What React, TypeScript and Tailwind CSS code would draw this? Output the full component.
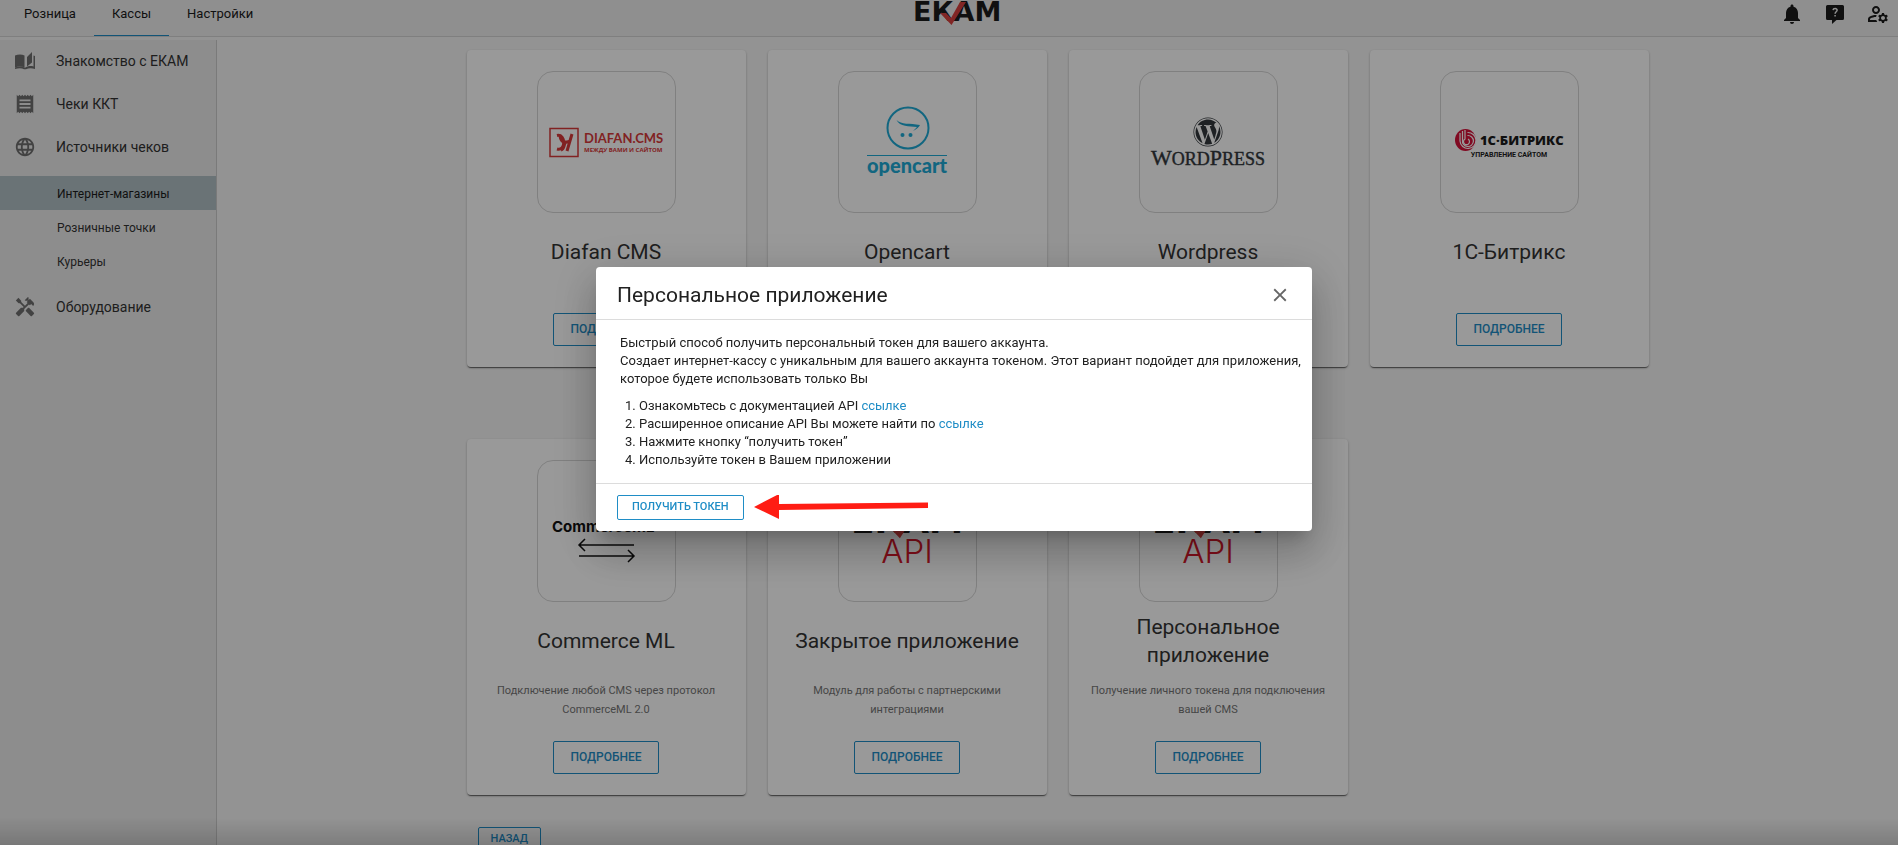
import { ReactNode } from "react";
import { FaWordpress } from "react-icons/fa";
import {
	MdClose,
	MdHandyman,
	MdLanguage,
	MdNotifications,
	MdOutlineManageAccounts,
	MdReceipt,
} from "react-icons/md";

const EkamMark = () => (
	<>
		<text x="0" y="19" fill="#1b1b1b" fontFamily="DejaVu Sans" fontWeight="700" fontSize="27">ЕКАМ</text>
		<path d="M27 11h6l5 5L47 0h6L38.500 23z" fill="#d8403f" />
	</>
);

const LogoFrame = ({ children, label }: { children: ReactNode; label: string }) => (
	<svg viewBox="0 0 137 140" className="h-[140px] w-[137px]" role="img" aria-label={label}>
		{children}
	</svg>
);

const DiafanLogo = () => (
	<LogoFrame label="Diafan CMS">
		<g fill="none" stroke="#d8393a">
			<rect x="12" y="56.500" width="28" height="28" strokeWidth="1.500" />
			<path d="M19 63.500c9-2 9 16 0 13.500" strokeWidth="3" />
			<path d="M22 64c1 6 4 7 9 5.500M34 62l-5 17M28 70c-3 3-1 7-5 8" strokeWidth="3" />
		</g>
		<text x="46" y="71" fill="#d8393a" fontFamily="Lato" fontWeight="700" fontSize="13">DIAFAN.CMS</text>
		<text x="46" y="80" fill="#d8393a" fontFamily="Open Sans" fontWeight="700" fontSize="6">МЕЖДУ ВАМИ И САЙТОМ</text>
	</LogoFrame>
);

const OpencartLogo = () => (
	<LogoFrame label="Opencart">
		<circle cx="69" cy="56" r="20.500" fill="none" stroke="#1eaad6" strokeWidth="2" />
		<path d="M57.500 48c5 5 13 3 23.500 5-1 2-3 4-7 6 2-2 3-3 4-4-8-1-17 0-20.500-7z" fill="#1eaad6" />
		<circle cx="63.500" cy="63" r="2" fill="#1eaad6" />
		<circle cx="71.500" cy="63" r="2" fill="#1eaad6" />
		<path d="M28 83.500h80" stroke="#1eaad6" />
		<text x="68" y="101" textAnchor="middle" fill="#1eaad6" fontFamily="Lato" fontWeight="900" fontSize="20">opencart</text>
	</LogoFrame>
);

const WordpressLogo = () => (
	<LogoFrame label="Wordpress">
		<FaWordpress x="53" y="45" size={30} color="#32373c" />
		<text x="68" y="93" textAnchor="middle" fill="#32373c" stroke="#32373c" strokeWidth="0.400" fontFamily="Liberation Serif" fontSize="18">
			<tspan fontSize="22">W</tspan>ORD<tspan fontSize="22">P</tspan>RESS
		</text>
	</LogoFrame>
);

const BitrixLogo = () => (
	<LogoFrame label="1С-Битрикс">
		<ellipse cx="24.500" cy="68" rx="10.500" ry="11" fill="#d6123a" />
		<g fill="none" stroke="#fff" strokeWidth="1.200">
			<path d="M24 58v9a3 3 0 1 0 3 0" />
			<path d="M21.500 59v9a5.500 5.500 0 1 0 5-4.500" />
			<path d="M19 61v8a8 8 0 1 0 7.500-8.500" />
		</g>
		<text x="39" y="73" fill="#1b1b1b" fontFamily="Open Sans" fontWeight="800" fontSize="13">1С·БИТРИКС</text>
		<text x="68" y="85" textAnchor="middle" fill="#1b1b1b" fontFamily="Roboto" fontWeight="700" fontSize="7">УПРАВЛЕНИЕ САЙТОМ</text>
	</LogoFrame>
);

const CommerceLogo = () => (
	<LogoFrame label="Commerce ML">
		<text x="14" y="71" fill="#111" fontFamily="Inter" fontWeight="700" fontSize="15">CommerceML</text>
		<path d="M96 84H41m6-6-6 6 6 6M41 95h55m-6-6 6 6-6 6" fill="none" stroke="#111" strokeWidth="1.500" />
	</LogoFrame>
);

const EkamApiLogo = () => (
	<LogoFrame label="EKAM API">
		<g transform="translate(12 48) scale(1.270)">
			<EkamMark />
		</g>
		<text x="68" y="102" textAnchor="middle" fill="#d6182a" fontFamily="Inter" fontWeight="300" fontSize="33">API</text>
	</LogoFrame>
);

const BookIcon = () => (
	<svg viewBox="0 0 20 18" className="h-[18px] w-5" fill="currentColor">
		<path d="M0 3.500C3 2 7 2 9.500 3.500v12C7 14 3 14 0 15.500zM12 5l5-5v10.500l-5 4z" />
		<path d="M18.500 3.500v11c-3-.8-6-.4-8.500 1.200-2.500-1.600-6.500-1.700-10-.2v1.500c3.500-1 7-1 9 .2h2c2.500-1.200 6-1.200 9-.2V4z" />
	</svg>
);

const HelpIcon = () => (
	<svg viewBox="0 0 24 24" className="size-6">
		<path d="M4.500 3h15A1.500 1.500 0 0 1 21 4.500v12a1.500 1.500 0 0 1-1.500 1.500h-6L9 22v-4H4.500A1.500 1.500 0 0 1 3 16.500v-12A1.500 1.500 0 0 1 4.500 3z" fill="currentColor" />
		<path d="M10 8.200c.3-2.200 4.300-2.100 4.100.1-.1 1.500-2 1.500-2 3.400m0 1.300v1.600" fill="none" stroke="#eeeeee" strokeWidth="1.500" />
	</svg>
);

const tabs = ["Розница", "Кассы", "Настройки"];

const sources = ["Интернет-магазины", "Розничные точки", "Курьеры"];

const cards = [
	{ title: "Diafan CMS", logo: <DiafanLogo /> },
	{ title: "Opencart", logo: <OpencartLogo /> },
	{ title: "Wordpress", logo: <WordpressLogo /> },
	{ title: "1С-Битрикс", logo: <BitrixLogo /> },
	{
		title: "Commerce ML",
		logo: <CommerceLogo />,
		description: "Подключение любой CMS через протокол CommerceML 2.0",
	},
	{
		title: "Закрытое приложение",
		logo: <EkamApiLogo />,
		description: "Модуль для работы с партнерскими интеграциями",
	},
	{
		title: "Персональное приложение",
		logo: <EkamApiLogo />,
		description: "Получение личного токена для подключения вашей CMS",
	},
];

const Header = () => (
	<header className="flex h-[37px] border-b border-[#d4d4d4] bg-[#eeeeee] text-[#1b1b1b]">
		<nav className="flex flex-1 pl-1.5">
			{tabs.map((tab) => (
				<button
					key={tab}
					type="button"
					className={`h-9 border-b px-[18px] pb-2 text-[13px] ${
						tab === "Кассы" ? "border-[#1f8dc6]" : "border-transparent"
					}`}>
					{tab}
				</button>
			))}
		</nav>
		<a href="#" className="pt-0.5 pl-5" aria-label="ЕКАМ">
			<svg viewBox="0 0 91 22" className="h-[22px] w-[91px] overflow-visible">
				<EkamMark />
			</svg>
		</a>
		<div className="flex flex-1 items-center justify-end gap-[19px] pr-2 pb-2">
			<button type="button" aria-label="Уведомления">
				<MdNotifications className="size-6" />
			</button>
			<button type="button" aria-label="Помощь">
				<HelpIcon />
			</button>
			<button type="button" aria-label="Аккаунт">
				<MdOutlineManageAccounts className="size-6" />
			</button>
		</div>
	</header>
);

const SidebarLink = ({ icon, children }: { icon: ReactNode; children: ReactNode }) => (
	<a href="#" className="flex h-[43px] items-center gap-[21px] pb-0.5 pl-[15px] text-sm text-[#333333]">
		<span className="flex w-5 justify-center text-[#6f6f6f]">{icon}</span>
		{children}
	</a>
);

const Sidebar = () => (
	<aside className="mt-[3px] w-[217px] shrink-0 border-r border-[#cccccc] bg-[#ebebeb]">
		<SidebarLink icon={<BookIcon />}>Знакомство с ЕКАМ</SidebarLink>
		<SidebarLink icon={<MdReceipt className="size-[22px] shrink-0" />}>Чеки ККТ</SidebarLink>
		<SidebarLink icon={<MdLanguage className="size-[22px] shrink-0" />}>Источники чеков</SidebarLink>
		<div className="mt-[7px] mb-2">
			{sources.map((source, index) => (
				<a
					key={source}
					href="#"
					className={`flex h-[34px] items-center pt-0.5 pl-[57px] text-xs ${
						index === 0 ? "bg-[#b1c0c5] text-[#1b1b1b]" : "text-[#333333]"
					}`}>
					{source}
				</a>
			))}
		</div>
		<SidebarLink icon={<MdHandyman className="size-[22px] shrink-0" />}>Оборудование</SidebarLink>
	</aside>
);

const Card = ({ title, logo, description }: { title: string; logo: ReactNode; description?: string }) => (
	<article className="flex flex-col items-center rounded bg-white px-5 py-[21px] text-center shadow-[0_2px_1px_-1px_rgba(0,0,0,0.4),0_1px_1px_rgba(0,0,0,0.2),0_1px_3px_rgba(0,0,0,0.2)]">
		<div className="rounded-2xl border border-[#d6d6d6]">{logo}</div>
		<h2 className="flex min-h-[78px] items-center text-[21px] leading-7 text-[#333333]">{title}</h2>
		{description && <p className="px-0.5 pt-px text-[11px] leading-[19px] text-[#757575]">{description}</p>}
		<button
			type="button"
			className="mt-[22px] h-[33px] rounded-xs border border-[#1f8dc6] px-4 pb-0.5 text-xs font-medium text-[#1f8dc6]">
			ПОДРОБНЕЕ
		</button>
	</article>
);

const TokenDialog = () => (
	<div className="fixed inset-0 flex items-start justify-center bg-black/40 pt-[267px] pl-2.5">
		<div className="absolute inset-x-0 bottom-0 h-7 bg-linear-to-b from-transparent to-black/15" />
		<section
			role="dialog"
			aria-modal="true"
			aria-labelledby="dialog-title"
			className="relative w-full max-w-[716px] rounded bg-white text-[#212121] shadow-[0_11px_15px_-7px_rgba(0,0,0,0.2),0_24px_38px_3px_rgba(0,0,0,0.14),0_9px_46px_8px_rgba(0,0,0,0.12)]">
			<div className="flex h-[53px] items-center justify-between border-b border-[#dcdcdc] px-[21px] pt-1">
				<h1 id="dialog-title" className="text-[21px] leading-7">
					Персональное приложение
				</h1>
				<button type="button" aria-label="Закрыть" className="text-[#666666]">
					<MdClose className="size-[22px]" />
				</button>
			</div>
			<div className="py-[14px] pr-2 pl-6 text-[13px] leading-[18px]">
				<p>
					Быстрый способ получить персональный токен для вашего аккаунта.
					<br />
					Создает интернет-кассу с уникальным для вашего аккаунта токеном. Этот вариант подойдет для приложения,
					которое будете использовать только Вы
				</p>
				<ol className="mt-[9px] list-decimal pl-[19px]">
					<li>
						Ознакомьтесь с документацией API <a href="#" className="text-[#1f8dc6]">ссылке</a>
					</li>
					<li>
						Расширенное описание API Вы можете найти по <a href="#" className="text-[#1f8dc6]">ссылке</a>
					</li>
					<li>Нажмите кнопку “получить токен”</li>
					<li>Используйте токен в Вашем приложении</li>
				</ol>
			</div>
			<div className="flex items-center gap-2.5 border-t border-[#dcdcdc] px-[21px] py-[11px]">
				<button
					type="button"
					className="h-[25px] rounded-xs border border-[#1f8dc6] px-[14px] text-[11px] font-medium text-[#1f8dc6]">
					ПОЛУЧИТЬ ТОКЕН
				</button>
				<svg viewBox="0 0 174 25" className="h-[25px] w-[174px]" fill="#ff1d14">
					<path d="M0 12 25-1v10l149-1.500v5.500L25 15v9z" />
				</svg>
			</div>
		</section>
	</div>
);

export default function App() {
	return (
		<div className="flex h-screen flex-col overflow-hidden bg-[#f6f6f6] font-[Roboto,sans-serif]">
			<Header />
			<div className="flex min-h-0 flex-1">
				<Sidebar />
				<main className="flex-1 pt-[13px]">
					<div className="mx-auto max-w-[1182px]">
						<div className="grid grid-cols-4 gap-x-[22px] gap-y-[72px]">
							{cards.map((card) => (
								<Card key={card.title} {...card} />
							))}
						</div>
						<button
							type="button"
							className="mt-8 ml-[11px] h-[25px] rounded-xs border border-[#1f8dc6] px-3 text-[11px] font-medium text-[#1f8dc6]">
							НАЗАД
						</button>
					</div>
				</main>
			</div>
			<TokenDialog />
		</div>
	);
}
